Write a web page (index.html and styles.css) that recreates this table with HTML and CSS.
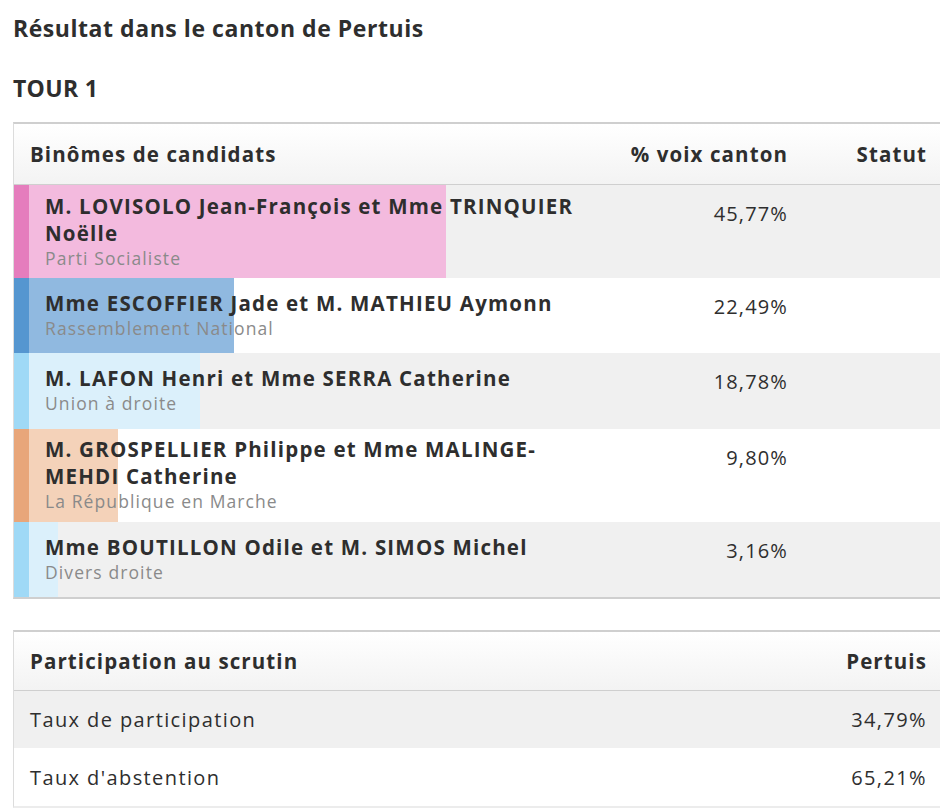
FILE: index.html
```html
<!DOCTYPE html>
<html lang="fr">
<head>
<meta charset="utf-8">
<title>Résultat dans le canton de Pertuis</title>
<link rel="stylesheet" href="styles.css">
</head>
<body>
<main class="page">
  <h1 class="title">Résultat dans le canton de Pertuis</h1>
  <h2 class="round">TOUR 1</h2>

  <section class="results">
    <div class="results-head">
      <div class="h-name">Binômes de candidats</div>
      <div class="h-pct">% voix canton</div>
      <div class="h-status">Statut</div>
    </div>

    <div class="cand-row alt ps">
      <div class="track"><div class="bar" style="width:45.77%"></div></div>
      <span class="stripe"></span>
      <div class="cand">
        <span class="name">M. LOVISOLO Jean-François et Mme TRINQUIER Noëlle</span>
        <span class="party">Parti Socialiste</span>
      </div>
      <div class="pct">45,77%</div>
      <div class="status"></div>
    </div>

    <div class="cand-row rn">
      <div class="track"><div class="bar" style="width:22.49%"></div></div>
      <span class="stripe"></span>
      <div class="cand">
        <span class="name">Mme ESCOFFIER Jade et M. MATHIEU Aymonn</span>
        <span class="party">Rassemblement National</span>
      </div>
      <div class="pct">22,49%</div>
      <div class="status"></div>
    </div>

    <div class="cand-row alt right">
      <div class="track"><div class="bar" style="width:18.78%"></div></div>
      <span class="stripe"></span>
      <div class="cand">
        <span class="name">M. LAFON Henri et Mme SERRA Catherine</span>
        <span class="party">Union à droite</span>
      </div>
      <div class="pct">18,78%</div>
      <div class="status"></div>
    </div>

    <div class="cand-row rem">
      <div class="track"><div class="bar" style="width:9.80%"></div></div>
      <span class="stripe"></span>
      <div class="cand">
        <span class="name">M. GROSPELLIER Philippe et Mme MALINGE-MEHDI Catherine</span>
        <span class="party">La République en Marche</span>
      </div>
      <div class="pct">9,80%</div>
      <div class="status"></div>
    </div>

    <div class="cand-row alt right">
      <div class="track"><div class="bar" style="width:3.16%"></div></div>
      <span class="stripe"></span>
      <div class="cand">
        <span class="name">Mme BOUTILLON Odile et M. SIMOS Michel</span>
        <span class="party">Divers droite</span>
      </div>
      <div class="pct">3,16%</div>
      <div class="status"></div>
    </div>
  </section>

  <section class="participation">
    <div class="part-head">
      <div>Participation au scrutin</div>
      <div class="val">Pertuis</div>
    </div>
    <div class="part-row alt">
      <div>Taux de participation</div>
      <div class="val">34,79%</div>
    </div>
    <div class="part-row">
      <div>Taux d'abstention</div>
      <div class="val">65,21%</div>
    </div>
  </section>
</main>
</body>
</html>
```

FILE: styles.css
```css
html, body {
  margin: 0;
  padding: 0;
  background: #fff;
}

body {
  font-family: "Open Sans", "Liberation Sans", sans-serif;
  color: #2e2e2e;
}

.page {
  padding: 12px 0 0 13px;
  width: 927px;
}

.title {
  margin: 0;
  font-size: 23px;
  line-height: 32px;
  font-weight: 700;
  letter-spacing: 0.55px;
}

.round {
  margin: 28px 0 18px;
  font-size: 23px;
  line-height: 32px;
  font-weight: 700;
  letter-spacing: 0.3px;
}

/* Results table */
.results {
  border-top: 2px solid #cfcfcf;
  border-bottom: 2px solid #cfcfcf;
  border-left: 1px solid #dcdcdc;
}

.results-head {
  display: grid;
  grid-template-columns: 1fr 200px 138px;
  align-items: center;
  height: 60px;
  background: linear-gradient(#ffffff, #f3f3f3);
  border-bottom: 1px solid #cfcfcf;
  font-size: 20.5px;
  font-weight: 700;
  letter-spacing: 1.1px;
}

.h-name {
  padding-left: 16px;
}

.h-pct,
.h-status {
  text-align: right;
  padding-right: 14px;
}

.h-status {
  padding-right: 13px;
}

.cand-row {
  position: relative;
  display: grid;
  grid-template-columns: 15px 1fr 200px 138px;
  min-height: 75.25px;
  background: #fff;
}

.cand-row.alt {
  background: #f0f0f0;
}

.track {
  position: absolute;
  top: 0;
  bottom: 0;
  left: 15px;
  right: 0;
}

.bar {
  height: 100%;
}

.stripe,
.cand,
.pct,
.status {
  position: relative;
}

.cand {
  display: flex;
  flex-direction: column;
  justify-content: center;
  padding: 7.5px 8px 8.5px 16px;
}

.name {
  font-size: 20.5px;
  line-height: 27px;
  font-weight: 700;
  letter-spacing: 1.2px;
}

.party {
  font-size: 17.5px;
  line-height: 23px;
  color: #8a8a8a;
  letter-spacing: 1.1px;
}

.pct {
  text-align: right;
  padding: 15px 14px 0 0;
  font-size: 20px;
  line-height: 27px;
  letter-spacing: 1.15px;
}

.ps .stripe { background: #e57dbd; }
.ps .bar { background: #f3bade; }
.rn .stripe { background: #5596d0; }
.rn .bar { background: #90b9e0; }
.right .stripe { background: #9fd9f6; }
.right .bar { background: #dbf0fb; }
.rem .stripe { background: #e8a67a; }
.rem .bar { background: #f4d2b9; }

/* Participation table */
.participation {
  margin-top: 31px;
  border-top: 2px solid #cfcfcf;
  border-left: 1px solid #dcdcdc;
  border-bottom: 2px solid #ececec;
}

.part-head,
.part-row {
  display: flex;
  justify-content: space-between;
  align-items: center;
  padding: 0 13px 0 16px;
  font-size: 20px;
}

.part-head {
  height: 58px;
  background: linear-gradient(#ffffff, #f3f3f3);
  border-bottom: 1px solid #cfcfcf;
  font-size: 20.5px;
  font-weight: 700;
  letter-spacing: 1.1px;
}

.part-row {
  height: 57.5px;
  background: #fff;
  letter-spacing: 1.4px;
}

.part-row.alt {
  background: #f0f0f0;
}
```
